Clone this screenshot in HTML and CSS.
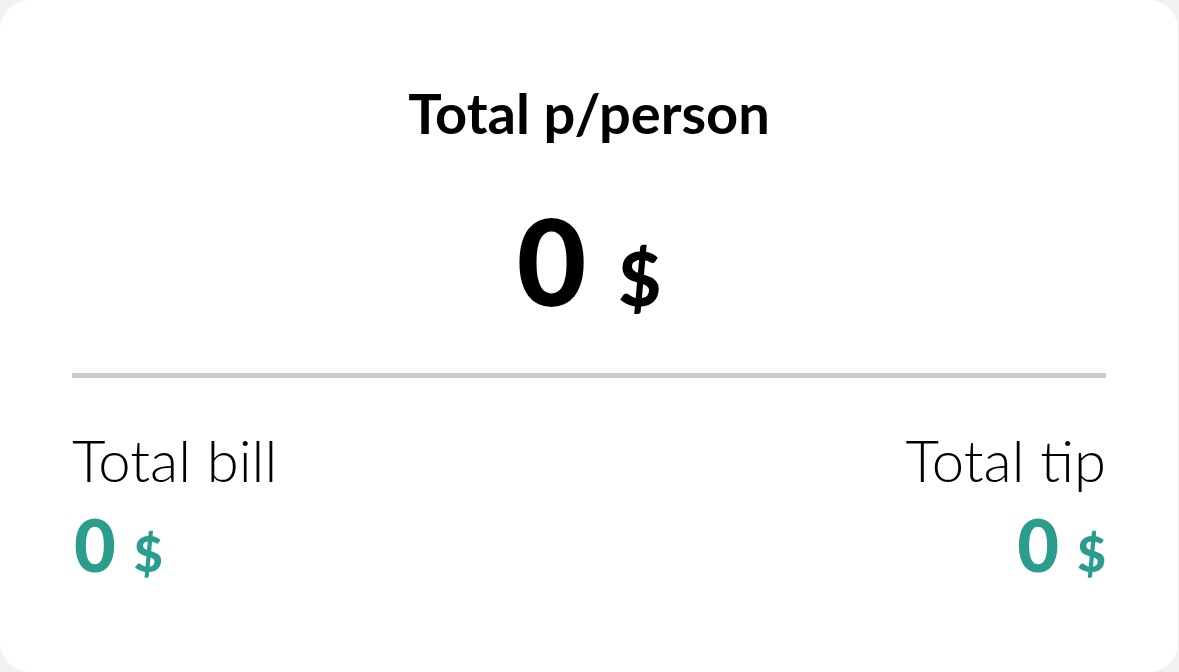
FILE: index.html
```html
<!DOCTYPE html>
<html lang="en">
<head>
<meta charset="utf-8">
<title>Tip calculator result</title>
<link rel="stylesheet" href="styles.css">
</head>
<body>
<main class="card">
  <h1 class="title">Total p/person</h1>
  <div class="total"><span class="num">0</span><span class="cur">$</span></div>
  <hr class="divider">
  <div class="summary">
    <div class="item">
      <div class="label">Total bill</div>
      <div class="value"><span class="num">0</span><span class="cur">$</span></div>
    </div>
    <div class="item item-right">
      <div class="label">Total tip</div>
      <div class="value"><span class="num">0</span><span class="cur">$</span></div>
    </div>
  </div>
</main>
</body>
</html>
```
FILE: styles.css
```css
html, body {
  margin: 0;
  padding: 0;
  background: #f2f2f2;
}
body {
  width: 1179px;
  height: 672px;
  font-family: "Lato", "Noto Sans", sans-serif;
  color: #000;
}
.card {
  box-sizing: border-box;
  width: 1178px;
  height: 672px;
  background: #fff;
  border-radius: 30px;
  padding: 0 72px;
  display: flex;
  flex-direction: column;
  overflow: hidden;
}
.title {
  margin: 85px 0 0;
  font-size: 56px;
  line-height: 1;
  font-weight: 700;
  text-align: center;
}
.total {
  margin-top: 59px;
  text-align: center;
  line-height: 1;
  font-weight: 900;
}
.total .num {
  font-size: 120px;
}
.total .cur {
  font-size: 74px;
  margin-left: 32px;
}
.divider {
  margin: 53px 0 0;
  border: 0;
  height: 5px;
  background: #cbcbcb;
}
.summary {
  margin-top: 53px;
  display: flex;
  justify-content: space-between;
}
.item {
  display: flex;
  flex-direction: column;
}
.item-right {
  align-items: flex-end;
}
.label {
  font-size: 58px;
  font-weight: 300;
  line-height: 1;
}
.value {
  margin-top: 19px;
  padding-left: 2px;
  line-height: 1;
  color: #2a9d8c;
  font-weight: 900;
}
.value .num {
  font-size: 72px;
}
.value .cur {
  font-size: 50px;
  margin-left: 18px;
}
```
